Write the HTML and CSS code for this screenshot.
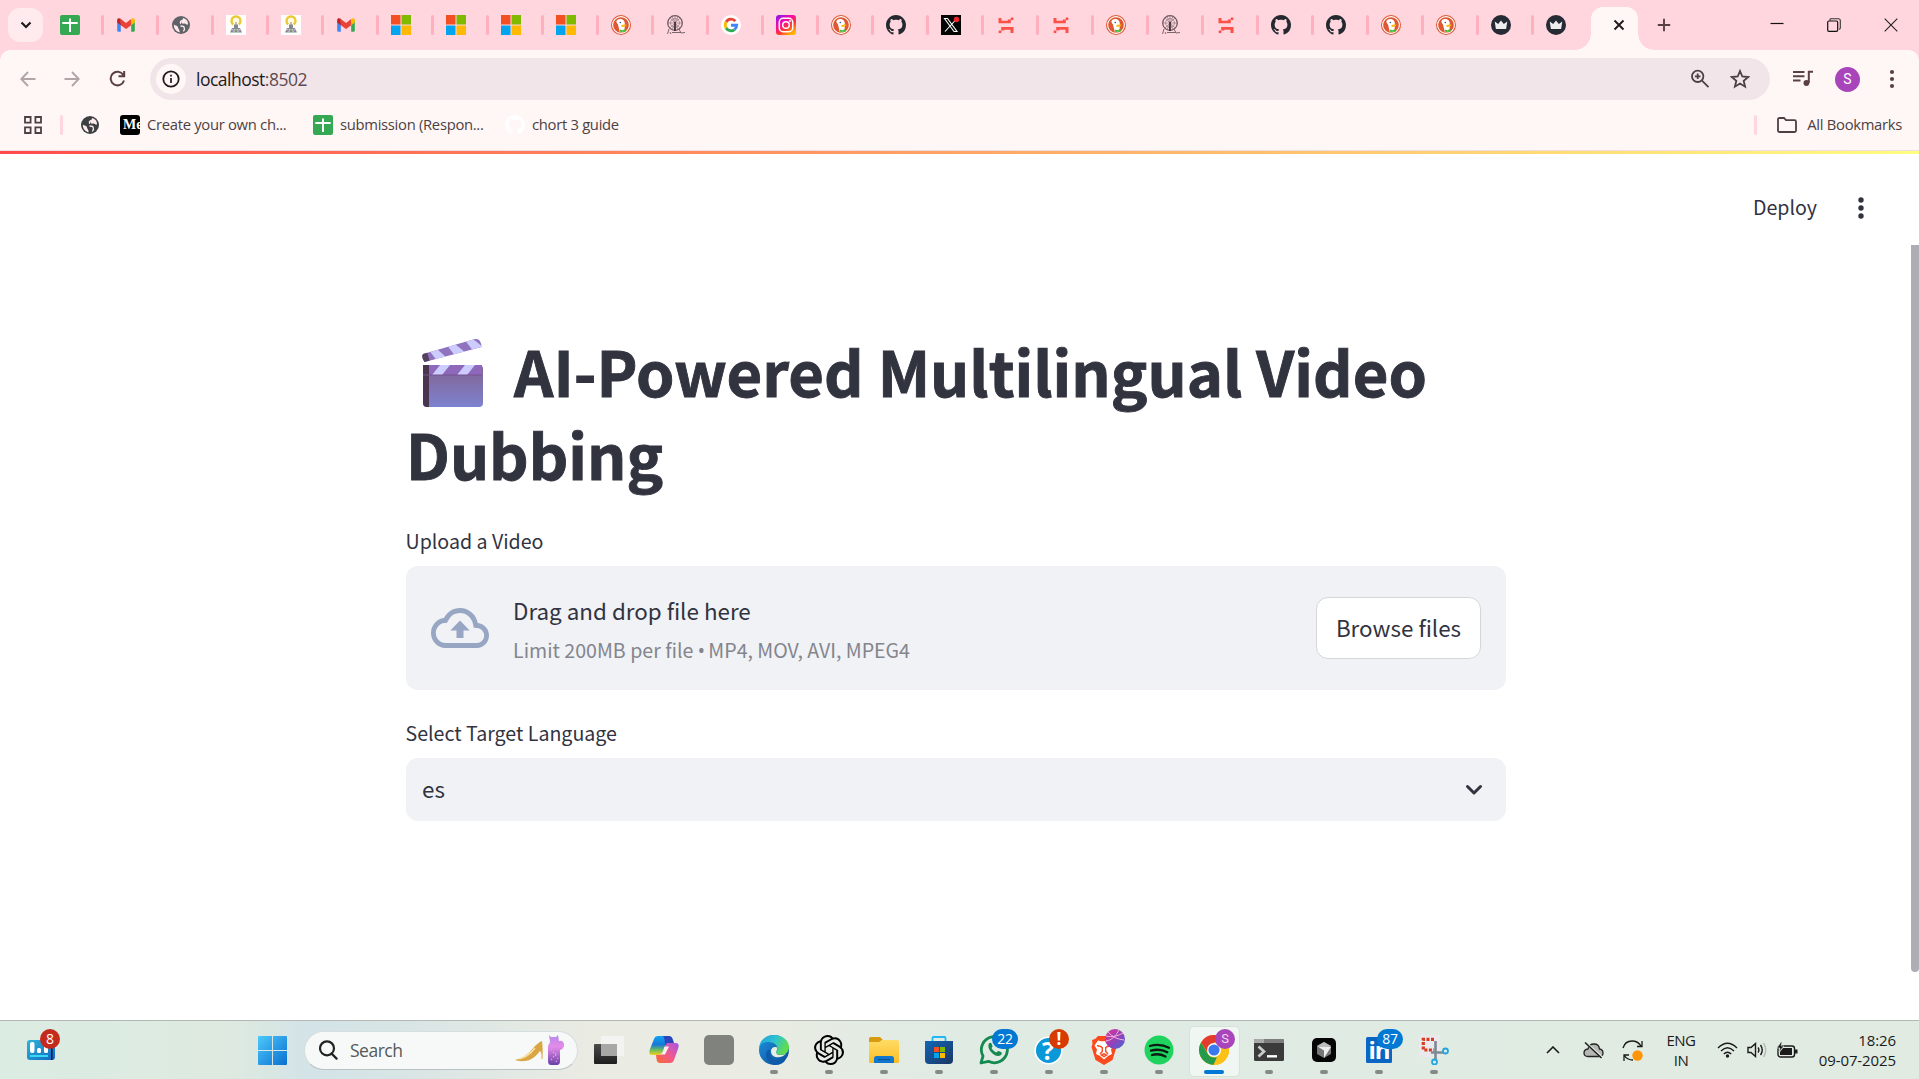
FILE: index.html
```html
<!DOCTYPE html>
<html lang="en">
<head>
<meta charset="utf-8">
<title>AI-Powered Multilingual Video Dubbing</title>
<link rel="stylesheet" href="styles.css">
</head>
<body>
<svg class="defs" width="0" height="0" aria-hidden="true">
  <defs>
    <linearGradient id="gIg" x1="0" y1="0" x2="0.7" y2="1"><stop offset="0" stop-color="#7a1cf5"/><stop offset=".4" stop-color="#f808a8"/><stop offset=".7" stop-color="#ff3a2e"/><stop offset="1" stop-color="#ffb400"/></linearGradient>
    <linearGradient id="gWin" x1="0" y1="0" x2="1" y2="1"><stop offset="0" stop-color="#4cc9fb"/><stop offset="1" stop-color="#0a6fd0"/></linearGradient>
    <linearGradient id="gWid" x1="0" y1="0" x2="1" y2="1"><stop offset="0" stop-color="#2fb4d8"/><stop offset="1" stop-color="#1267c4"/></linearGradient>
    <linearGradient id="gCopA" x1="0" y1="0" x2="0" y2="1"><stop offset="0" stop-color="#12a5f0"/><stop offset=".45" stop-color="#1477d8"/><stop offset=".75" stop-color="#6fbf5a"/><stop offset="1" stop-color="#f5cf1b"/></linearGradient>
    <linearGradient id="gCopB" x1="1" y1="0" x2="0" y2="1"><stop offset="0" stop-color="#a456e8"/><stop offset=".5" stop-color="#f0588f"/><stop offset="1" stop-color="#fb6a2c"/></linearGradient>
    <linearGradient id="gEdge" x1="0" y1="0" x2="1" y2=".4"><stop offset="0" stop-color="#1f9fe0"/><stop offset=".55" stop-color="#2fc3cf"/><stop offset="1" stop-color="#60dc4e"/></linearGradient>
    <linearGradient id="gEdgeB" x1="0" y1="0" x2="1" y2="1"><stop offset="0" stop-color="#1d92e0"/><stop offset="1" stop-color="#0c4a94"/></linearGradient>
    <linearGradient id="gFold" x1="0" y1="0" x2="0" y2="1"><stop offset="0" stop-color="#ffdc65"/><stop offset="1" stop-color="#fcbd25"/></linearGradient>
    <linearGradient id="gStore" x1="0" y1="0" x2="1" y2="1"><stop offset="0" stop-color="#0f67b8"/><stop offset="1" stop-color="#1d3563"/></linearGradient>
    <linearGradient id="gOrb" x1="0" y1="0" x2="1" y2="1"><stop offset="0" stop-color="#e0379a"/><stop offset=".5" stop-color="#9a3fb5"/><stop offset="1" stop-color="#3b6bdc"/></linearGradient>
    <linearGradient id="gClap" x1="0" y1="0" x2="0" y2="1"><stop offset="0" stop-color="#83618f"/><stop offset="1" stop-color="#7d83cf"/></linearGradient>
    <linearGradient id="gTask" x1="0" y1="0" x2="0" y2="1"><stop offset="0" stop-color="#4b4b4b"/><stop offset="1" stop-color="#1e1e1e"/></linearGradient>
    <linearGradient id="gDress" x1="0" y1="0" x2="0" y2="1"><stop offset="0" stop-color="#b58bea"/><stop offset=".4" stop-color="#e58be8"/><stop offset="1" stop-color="#6a3fa6"/></linearGradient>
    <clipPath id="cArm"><path d="M1 16 L53 1 Q59 0 59.500 9 L2.500 24 Q-1 19 1 16z"/></clipPath>
    <clipPath id="cBar"><rect x="1" y="27" width="59" height="10"/></clipPath>

    <symbol id="sheets" viewBox="0 0 20 20"><rect width="20" height="20" rx="2" fill="#34a853"/><path d="M2.300 8H17.700M10 3.500V17" stroke="#fff" stroke-width="2" fill="none"/></symbol>
    <symbol id="gmail" viewBox="0 0 20 20"><path d="M1.200 5v10.500q0 1.300 1.300 1.300h2.300V8z" fill="#4285f4"/><path d="M18.800 5v10.500q0 1.300-1.300 1.300h-2.300V8z" fill="#34a853"/><path d="M4.800 4v6.300L10 14l5.200-3.700V4L10 8z" fill="#ea4335"/><path d="M1.200 7.500V5c0-2 2-2.400 3.600-1.200v6.500z" fill="#c5221f"/><path d="M18.800 7.500V5c0-2-2-2.400-3.600-1.200v6.500z" fill="#fbbc04"/></symbol>
    <symbol id="globe" viewBox="0 0 20 20"><circle cx="10" cy="10" r="9" fill="currentColor"/><path d="M2.900 9.400c1.500 1.200 4 1 4.200 3.300.2 1.500 1.600 1.600 1.500 4.500-3.600-.6-6-4-5.700-7.800zM12.500 3.300c4 1 5 5 4.300 6.300-1.500.5-2.200-1.500-3.600-1-2 .3-3.200-.4-3-2z" fill="#ffe9ec"/><path d="M12.500 3.400c.6 1.700-.8 2.100-2.500 2.600-1.500.5.200 1.900-.8 2.700M9.500 11c2 0 3.500 0 3.800 1.700.5 1.500.3 2.400-1 3.700" stroke="#ffe9ec" stroke-width="1.300" fill="none"/></symbol>
    <symbol id="lamp" viewBox="0 0 20 20"><rect width="20" height="20" fill="#fff"/><path d="M7.200 9.500Q5 7.500 5.700 4.500M12.800 9.500Q15 7.500 14.300 4.500M5.700 4.500Q7 1.500 10 1.500T14.300 4.500" fill="none" stroke="#ecca36" stroke-width="2.400"/><circle cx="10" cy="5.800" r="3" fill="#fffbe0"/><path d="M10 7v4" stroke="#999" stroke-width="1.200"/><path d="M8 9.500h4v3.500h2l2 4.500H4L6 13h2z" fill="#85898c"/><path d="M5.500 14.800h9M8 17v-3M12 17v-3" stroke="#fff" stroke-width=".7" stroke-dasharray="1.500 1"/></symbol>
    <symbol id="ms" viewBox="0 0 20 20"><path fill="#f25022" d="M0 0h9.500v9.500H0z"/><path fill="#7fba00" d="M10.500 0H20v9.500h-9.500z"/><path fill="#00a4ef" d="M0 10.500h9.500V20H0z"/><path fill="#ffb900" d="M10.500 10.500H20V20h-9.500z"/></symbol>
    <symbol id="duck" viewBox="0 0 20 20"><circle cx="10" cy="10" r="10" fill="#de5833"/><circle cx="10" cy="10" r="8.400" fill="none" stroke="#fff" stroke-width="1.100"/><path d="M5.500 6c.5-2 3.500-2.600 5.500-1.700 2 .8 3 2.700 2.800 5l-.3 7c-1.500 1-3.300 1.200-4.700.8L7 9.500C5.800 8 5.200 7 5.500 6z" fill="#fff"/><circle cx="9.300" cy="7.500" r=".8" fill="#2d4f8e"/><path d="M10.500 10q3-1 5.300-.2-.8 1.900-5.300 2.200z" fill="#fdb60a"/><path d="M8.800 14.500l2.700.7 3-1.500v3.300l-3-.3-2.200.6z" fill="#4cba3c"/></symbol>
    <symbol id="wheel" viewBox="0 0 20 20"><g fill="none" stroke="#6d5960" stroke-width=".9"><circle cx="9" cy="8" r="7.300" stroke-width="1.300"/><circle cx="9" cy="8" r="4.500" stroke-width=".5"/><path d="M9 1v14M2 8h14M4 3l10 10M14 3L4 13M6 1.500l6 13M12 1.500l-6 13" stroke-width=".5"/><path d="M1.500 19l1.500-5M4 17l1 2M6 17.500h9M13 14l2 4 4-.5"/></g><path d="M8.300 7h1.500v9H8z" fill="#3b2d33"/></symbol>
    <symbol id="google" viewBox="0 0 20 20"><circle cx="10" cy="10" r="10" fill="#fff"/><g fill="none" stroke-width="2.900"><path d="M14.400 6.100A5.700 5.700 0 0 0 5.100 7" stroke="#ea4335"/><path d="M5.100 7a5.900 5.900 0 0 0 0 6" stroke="#fbbc05"/><path d="M5.100 13a5.700 5.700 0 0 0 8.400 1.600" stroke="#34a853"/><path d="M13.500 14.600a5.700 5.700 0 0 0 2.200-4.300H10" stroke="#4285f4"/></g></symbol>
    <symbol id="insta" viewBox="0 0 20 20"><rect width="20" height="20" rx="3" fill="url(#gIg)"/><rect x="3.300" y="3.300" width="13.400" height="13.400" rx="3.800" fill="none" stroke="#fff" stroke-width="1.500"/><circle cx="10" cy="10" r="3.300" fill="none" stroke="#fff" stroke-width="1.500"/><circle cx="14" cy="6" r="1" fill="#fff"/></symbol>
    <symbol id="github" viewBox="0 0 16 16"><path fill="currentColor" d="M8 0C3.580 0 0 3.580 0 8c0 3.540 2.290 6.530 5.470 7.590.4.070.55-.17.55-.38 0-.19-.01-.82-.01-1.490-2.010.37-2.530-.49-2.690-.94-.09-.23-.48-.94-.82-1.130-.28-.15-.68-.52-.01-.53.63-.01 1.080.58 1.230.82.72 1.210 1.870.87 2.330.66.07-.52.28-.87.51-1.070-1.780-.2-3.640-.89-3.640-3.950 0-.87.31-1.590.82-2.150-.08-.2-.36-1.020.08-2.120 0 0 .67-.21 2.200.82.64-.18 1.320-.27 2-.27s1.360.09 2 .27c1.530-1.040 2.200-.82 2.200-.82.44 1.100.16 1.920.08 2.120.51.56.82 1.270.82 2.150 0 3.070-1.870 3.750-3.650 3.950.29.25.54.73.54 1.480 0 1.070-.01 1.930-.01 2.200 0 .21.15.46.55.38A8.010 8.010 0 0 0 16 8c0-4.420-3.580-8-8-8z"/></symbol>
    <symbol id="xlogo" viewBox="0 0 20 20"><path d="M0 0h20v20H0z" fill="#050505"/><path d="M3.500 3.500h3l9.500 13h-3zM16 3.500L4 16.500" stroke="#fff" stroke-width="1.100" fill="none"/><circle cx="15.500" cy="4.500" r="2.700" fill="#f4212e"/></symbol>
    <symbol id="clip" viewBox="0 0 20 20"><g fill="#fb5148"><path d="M2.500 3H5.500V5.700H11.800V4.500H14.800V8.300H2.500z"/><circle cx="16" cy="3.800" r="1.500"/><path d="M17.500 18H14.500V14.700H8.200V15.600H5.200V12H17.500z"/><circle cx="4" cy="16.800" r="1.500"/></g></symbol>
    <symbol id="crown" viewBox="0 0 20 20"><circle cx="10" cy="10" r="10" fill="#252a34"/><path d="M3.700 6.500l3.500 2.400L10 5.500l2.800 3.400 3.500-2.400-1.200 7.500H4.900z" fill="#eee"/></symbol>
  </defs>
</svg>

<div class="screen">
  <header class="tabstrip">
    <div class="tab-search"><svg width="12" height="8" viewBox="0 0 12 8"><path d="M1.500 1.500L6 6l4.500-4.500" fill="none" stroke="#1f1a1b" stroke-width="2.200"/></svg></div>
    <div class="tabs">
      <div class="tab"><svg><use href="#sheets"/></svg></div>
      <div class="tab"><svg><use href="#gmail"/></svg></div>
      <div class="tab grey"><svg><use href="#globe"/></svg></div>
      <div class="tab"><svg><use href="#lamp"/></svg></div>
      <div class="tab"><svg><use href="#lamp"/></svg></div>
      <div class="tab"><svg><use href="#gmail"/></svg></div>
      <div class="tab"><svg><use href="#ms"/></svg></div>
      <div class="tab"><svg><use href="#ms"/></svg></div>
      <div class="tab"><svg><use href="#ms"/></svg></div>
      <div class="tab"><svg><use href="#ms"/></svg></div>
      <div class="tab"><svg><use href="#duck"/></svg></div>
      <div class="tab"><svg><use href="#wheel"/></svg></div>
      <div class="tab"><svg><use href="#google"/></svg></div>
      <div class="tab"><svg><use href="#insta"/></svg></div>
      <div class="tab"><svg><use href="#duck"/></svg></div>
      <div class="tab"><svg><use href="#github"/></svg></div>
      <div class="tab"><svg><use href="#xlogo"/></svg></div>
      <div class="tab"><svg><use href="#clip"/></svg></div>
      <div class="tab"><svg><use href="#clip"/></svg></div>
      <div class="tab"><svg><use href="#duck"/></svg></div>
      <div class="tab"><svg><use href="#wheel"/></svg></div>
      <div class="tab"><svg><use href="#clip"/></svg></div>
      <div class="tab"><svg><use href="#github"/></svg></div>
      <div class="tab"><svg><use href="#github"/></svg></div>
      <div class="tab"><svg><use href="#duck"/></svg></div>
      <div class="tab"><svg><use href="#duck"/></svg></div>
      <div class="tab"><svg><use href="#crown"/></svg></div>
      <div class="tab"><svg><use href="#crown"/></svg></div>
    </div>
    <div class="tab-active"><svg width="12" height="12" viewBox="0 0 12 12"><path d="M1.500 1.500l9 9M10.500 1.500l-9 9" stroke="#1f1a1b" stroke-width="1.900"/></svg></div>
    <div class="new-tab"><svg width="14" height="14" viewBox="0 0 14 14"><path d="M7 .8v12.400M.8 7h12.400" stroke="#5a4044" stroke-width="1.900"/></svg></div>
    <div class="win-controls">
      <svg width="14" height="14" viewBox="0 0 14 14"><path d="M.5 5.500h13" stroke="#111" stroke-width="1.200"/></svg>
      <svg width="14" height="14" viewBox="0 0 14 14"><path d="M3 2.800V1.500Q3 .7 4 .7h7.300q2 0 2 2V10q0 1-1.300 1.300" fill="none" stroke="#333" stroke-width="1.100"/><rect x=".7" y="3" width="10" height="10.300" rx="1.300" fill="none" stroke="#111" stroke-width="1.200"/></svg>
      <svg width="14" height="14" viewBox="0 0 14 14"><path d="M.7.700l12.600 12.600M13.300.700L.7 13.300" stroke="#222" stroke-width="1.100"/></svg>
    </div>
  </header>

  <div class="chrome">
    <div class="toolbar">
      <div class="nav">
        <svg width="16" height="16" viewBox="0 0 16 16" fill="none" stroke="#b3a5a7" stroke-width="1.900"><path d="M15.500 8H1.500M8 1L1.300 8 8 15"/></svg>
        <svg width="16" height="16" viewBox="0 0 16 16" fill="none" stroke="#b3a5a7" stroke-width="1.900"><path d="M.5 8h14M8 1l6.700 7L8 15"/></svg>
        <svg width="17" height="17" viewBox="0 0 17 17" fill="none" stroke="#5a4044" stroke-width="2"><path d="M14.300 5A6.800 6.800 0 1 0 15 10.500M15.200 1v5.200H9.500"/></svg>
      </div>
      <div class="omnibox">
        <span class="site-info"><svg width="18" height="18" viewBox="0 0 18 18"><circle cx="9" cy="9" r="7.700" fill="none" stroke="#1f1a1b" stroke-width="1.800"/><path d="M9 8v5M9 4.800v1.800" stroke="#1f1a1b" stroke-width="1.700"/></svg></span>
        <span class="url">localhost<span class="port">:8502</span></span>
        <svg class="zoom" width="20" height="20" viewBox="0 0 20 20" fill="none" stroke="#4d3f42" stroke-width="1.800"><circle cx="7.700" cy="7.300" r="5.700"/><path d="M12 11.700l6.500 6.500M7.700 4.500v5.600M4.900 7.300h5.600"/></svg>
        <svg width="20" height="20" viewBox="0 0 20 20" fill="none" stroke="#4d3f42" stroke-width="1.800"><path d="M10 2l2.300 5.500 5.900.5-4.500 3.900 1.400 5.800-5.100-3.100-5.100 3.100 1.400-5.800L1.800 8l5.900-.5z"/></svg>
      </div>
      <svg class="media" width="20" height="18" viewBox="0 0 20 18" fill="none" stroke="#5a4044" stroke-width="2"><path d="M0 2h11.500M0 6.300h11.500M0 10.500h7.500M15.800 13V1.800H20"/><circle cx="13.400" cy="13" r="2.900" fill="#5a4044" stroke="none"/></svg>
      <span class="avatar">S</span>
      <svg class="menu" width="6" height="20" viewBox="0 0 6 20" fill="#5a4044"><circle cx="3" cy="3" r="2.100"/><circle cx="3" cy="10" r="2.100"/><circle cx="3" cy="17" r="2.100"/></svg>
    </div>
    <div class="bookmarks">
      <svg class="grid" width="18" height="18" viewBox="0 0 18 18" fill="none" stroke="#4d3f42" stroke-width="1.800"><path d="M1 1h5.600v5.600H1zM11.400 1H17v5.600h-5.600zM1 11.400h5.600V17H1zM11.400 11.400H17V17h-5.600z"/></svg>
      <i class="sep"></i>
      <svg class="bm-globe" width="20" height="20"><use href="#globe"/></svg>
      <span class="bm bm-a"><span class="medium">Me</span><span class="bm-text">Create your own ch...</span></span>
      <span class="bm bm-b"><svg width="20" height="20"><use href="#sheets"/></svg><span class="bm-text">submission (Respon...</span></span>
      <span class="bm bm-c"><svg width="20" height="20"><use href="#github"/></svg><span class="bm-text">chort 3 guide</span></span>
      <span class="all"><i class="sep"></i><svg width="20" height="16" viewBox="0 0 20 16" fill="none" stroke="#4d3f42" stroke-width="1.800"><path d="M1 2.500Q1 1 2.500 1H7l2 2.200h8.500Q19 3.200 19 4.700v8.800Q19 15 17.500 15h-15Q1 15 1 13.500z"/></svg><span class="bm-text">All Bookmarks</span></span>
    </div>
  </div>

  <main class="app">
    <div class="decoration"></div>
    <div class="app-header"><span class="deploy">Deploy</span><svg width="6" height="22" viewBox="0 0 6 22" fill="#31333f"><circle cx="3" cy="3" r="2.700"/><circle cx="3" cy="11" r="2.700"/><circle cx="3" cy="19" r="2.700"/></svg></div>
    <div class="content">
      <h1><svg class="clapper" width="61" height="69" viewBox="0 0 61 69">
        <g clip-path="url(#cArm)"><path d="M0 0h61v26H0z" fill="#8f73bf"/><path d="M6 11h9l10 9-9 4zM24 6h9l11 9-10 4zM42 1h9l11 9-10 4z" fill="#ccccff"/><path d="M0 14h5l3 10H0z" fill="#54405f"/></g>
        <rect x="1" y="27" width="60" height="42" rx="4" fill="url(#gClap)"/><path d="M1 27h6v42H5q-4 0-4-4z" fill="#49354f"/><g clip-path="url(#cBar)"><path d="M7 27h54v10H7z" fill="#8d68bb"/><path d="M18 27h10l-8 10H10zM43 27h10l-8 10H35z" fill="#ccccff"/></g><path d="M1 37h59" stroke="#755391" stroke-width="1"/></svg>AI-Powered Multilingual Video<br>Dubbing</h1>
      <label class="label">Upload a Video</label>
      <section class="dropzone">
        <svg class="cloud" width="58" height="40" viewBox="0 4 24 16" preserveAspectRatio="none" fill="#97a6c3"><path d="M19.350 10.040A7.490 7.490 0 0 0 12 4C9.110 4 6.600 5.640 5.350 8.040A5.994 5.994 0 0 0 0 14c0 3.310 2.690 6 6 6h13c2.760 0 5-2.240 5-5 0-2.640-2.050-4.780-4.650-4.960zM19 18H6c-2.210 0-4-1.790-4-4 0-2.050 1.530-3.760 3.560-3.970l1.070-.11.5-.95A5.469 5.469 0 0 1 12 6c2.620 0 4.880 1.860 5.390 4.430l.3 1.500 1.530.11A2.980 2.980 0 0 1 22 15c0 1.650-1.350 3-3 3zM8 13h2.550v3h2.900v-3H16l-4-4z"/></svg>
        <div class="drop-text"><span class="drop-main">Drag and drop file here</span><span class="drop-sub">Limit 200MB per file <span class="bullet">•</span> MP4, MOV, AVI, MPEG4</span></div>
        <button class="browse">Browse files</button>
      </section>
      <label class="label second">Select Target Language</label>
      <div class="select"><span>es</span><svg width="18" height="12" viewBox="0 0 18 12"><path d="M2.500 2.500L9 9l6.500-6.500" fill="none" stroke="#31333f" stroke-width="3" stroke-linecap="round" stroke-linejoin="round"/></svg></div>
    </div>
    <div class="scrollbar"></div>
  </main>

  <footer class="taskbar">
    <div class="widget"><svg width="29" height="20" viewBox="0 0 29 20"><rect width="28" height="20" rx="3" fill="url(#gWid)"/><path d="M24 5h1.500v15H24z" fill="#0b1b34"/><rect x="3" y="2" width="4.500" height="11" rx="2" fill="#fff"/><rect x="10" y="8" width="4" height="5" rx="1.500" fill="#fff"/><rect x="17" y="5" width="4" height="8" rx="1.500" fill="#fff"/><path d="M3 16h18" stroke="#35d9f2" stroke-width="2"/></svg><b class="badge red">8</b></div>
    <svg class="start" width="29" height="29" viewBox="0 0 29 29"><path fill="url(#gWin)" d="M1 0h13v14H0V1q0-1 1-1zM15 0h13q1 0 1 1v13H15zM0 15h14v14H1q-1 0-1-1zM15 15h14v13q0 1-1 1H15z"/></svg>
    <div class="search"><svg width="20" height="20" viewBox="0 0 20 20" fill="none" stroke="#222" stroke-width="2.200"><circle cx="9" cy="8.300" r="7"/><path d="M13.600 13.600l5 5" stroke-linecap="round"/></svg><span>Search</span>
      <svg class="art" width="50" height="30" viewBox="0 0 50 30"><path d="M1 25Q12 23 20 12Q25 7 28 6Q29 12 28.500 24H27.500Q28 17 26 16Q20 24 14 25.500Q6 27 1 25z" fill="#d9a545"/><path d="M5 24Q14 22 21 13" stroke="#fae2a0" stroke-width="1.500" fill="none"/><path d="M35 0l2 2h5l2-2 1 6q4-1 5 3t-4 6v11q0 4-3 4h-6q-3 0-3-4V11l2-4z" fill="url(#gDress)"/><path d="M37 14l6 8M37 25l6-8M42 27l2-4" stroke="#d9a4ea" stroke-width="1.200" stroke-dasharray="1.500 2"/></svg></div>
    <div class="apps">
      <div class="app-icon"><svg width="30" height="30" viewBox="0 0 30 30"><rect x="0" y="9" width="23" height="20" rx="1" fill="url(#gTask)"/><rect x="7" y="1" width="23" height="20" rx="1" fill="#f5f5f5" opacity=".85"/><path d="M7 9h16v12H7z" fill="#a7a7a5"/></svg></div>
      <div class="app-icon"><svg width="30" height="30" viewBox="0 0 30 30"><path d="M9 1h10q3 0 4 4l1 3h-4q-3 0-4 4l-2 5q-1 3-4 3H3q-4 0-2-6L5 4q1-3 4-3z" fill="url(#gCopA)"/><path d="M17 1h3q3 0 4 4l1 3h-5q-3 0-4 3 0-8-2-10z" fill="#2a45bd"/><path d="M21 28H11q-3 0-3.500-4l-.5-4h3q3 0 4-4l2-5q1-3 4-3h7q4 0 2 6l-4 11q-1 3-4 3z" fill="url(#gCopB)"/><path d="M15.500 11.500h4.500l-4 8h-5q2-.5 3-3.500z" fill="#f5eff0"/></svg></div>
      <div class="app-icon"><svg width="30" height="30" viewBox="0 0 30 30"><rect width="30" height="30" rx="5" fill="#80827e"/></svg></div>
      <div class="app-icon run"><svg width="30" height="30" viewBox="0 0 30 30"><circle cx="15" cy="15" r="15" fill="url(#gEdgeB)"/><path d="M0 13C1 4 8 0 15 0c9 0 15 6 15 12 0 5-4 8-8 8-3 0-5-1-5-2.500 0-1 1.500-1.500 1.500-4C18.500 9 13 7 9 7c-4 0-8 2-9 6z" fill="url(#gEdge)"/><path d="M11 15q-1 7 5 11 6 2 11-2-3 6-11 6-9-2-9-11 1-5 4-4z" fill="#0f5ba9"/><path d="M12 16c0-3 3-5 6-3.500.8 2-.8 3.500-1 5 .5 3 6 3.500 10 1-3 5-15 6-15-2.500z" fill="#e9ece3"/></svg></div>
      <div class="app-icon run"><svg width="30" height="30" viewBox="0 0 24 24"><path d="M22.2819 9.8211a5.9847 5.9847 0 0 0-.5157-4.9108 6.0462 6.0462 0 0 0-6.5098-2.9A6.0651 6.0651 0 0 0 4.9807 4.1818a5.9847 5.9847 0 0 0-3.9977 2.9 6.0462 6.0462 0 0 0 .7427 7.0966 5.980 5.980 0 0 0 .511 4.9107 6.051 6.051 0 0 0 6.5146 2.9001A5.9847 5.9847 0 0 0 13.2599 24a6.0557 6.0557 0 0 0 5.7718-4.2058 5.9894 5.9894 0 0 0 3.9977-2.9001 6.0557 6.0557 0 0 0-.7475-7.0729zm-9.022 12.6081a4.4755 4.4755 0 0 1-2.8764-1.0408l.1419-.0804 4.7783-2.7582a.7948.7948 0 0 0 .3927-.6813v-6.7369l2.020 1.1686a.071.071 0 0 1 .038.052v5.5826a4.504 4.504 0 0 1-4.4945 4.4944zm-9.6607-4.1254a4.4708 4.4708 0 0 1-.5346-3.0137l.142.0852 4.783 2.7582a.7712.7712 0 0 0 .7806 0l5.8428-3.3685v2.3324a.0804.0804 0 0 1-.0332.0615L9.740 19.9502a4.4992 4.4992 0 0 1-6.1408-1.6464zM2.3408 7.8956a4.485 4.485 0 0 1 2.3655-1.9728V11.600a.7664.7664 0 0 0 .3879.6765l5.8144 3.3543-2.0201 1.1685a.0757.0757 0 0 1-.071 0l-4.8303-2.7865A4.504 4.504 0 0 1 2.3408 7.872zm16.5963 3.8558L13.1038 8.364 15.1192 7.200a.0757.0757 0 0 1 .071 0l4.8303 2.7913a4.4944 4.4944 0 0 1-.6765 8.1042v-5.6772a.790.790 0 0 0-.407-.667zm2.0107-3.0231l-.142-.0852-4.7735-2.7818a.7759.7759 0 0 0-.7854 0L9.409 9.2297V6.8974a.0662.0662 0 0 1 .0284-.0615l4.8303-2.7866a4.4992 4.4992 0 0 1 6.6802 4.660zM8.3065 12.863l-2.020-1.1638a.0804.0804 0 0 1-.038-.0567V6.0742a4.4992 4.4992 0 0 1 7.3757-3.4537l-.142.0805L8.704 5.459a.7948.7948 0 0 0-.3927.6813zm1.0976-2.3654l2.602-1.4998 2.6069 1.4998v2.9994l-2.5974 1.4997-2.6067-1.4997z"/></svg></div>
      <div class="app-icon run"><svg width="30" height="30" viewBox="0 0 30 30"><path d="M1.500 2H11l3 3-3 4H0V3.500Q0 2 1.500 2z" fill="#d99a12"/><path d="M0 7h10l3-2h15.500Q30 5 30 6.500V27q0 1-1 1H1q-1 0-1-1z" fill="url(#gFold)"/><path d="M5 28v-4.500Q5 21 7.500 21h15q2.500 0 2.500 2.500V28z" fill="#1177cd"/><path d="M9 24.500h12" stroke="#0c5595" stroke-width="1.200"/></svg></div>
      <div class="app-icon run"><svg width="30" height="30" viewBox="0 0 30 30"><path d="M8.500 6V3q0-1 1-1h11q1 0 1 1v3" fill="none" stroke="#1eb8f5" stroke-width="1.800"/><path d="M1 6h28v19q0 4-4 4H5q-4 0-4-4z" fill="url(#gStore)"/><path fill="#f25022" d="M10 12h5v5h-5z"/><path fill="#7fba00" d="M16 12h5v5h-5z"/><path fill="#00a4ef" d="M10 18h5v5h-5z"/><path fill="#ffb900" d="M16 18h5v5h-5z"/></svg></div>
      <div class="app-icon run"><svg width="30" height="30" viewBox="0 0 30 30"><path d="M2 28l2-7A13 13 0 1 1 9.500 26.300z" fill="none" stroke="#158a50" stroke-width="2.800" stroke-linejoin="round"/><path d="M10 8.300c1-1 2-.8 2.500.2l1 2.500c.2.700-.4 1.300-1 2 1 2 3 3.800 5 4.500.8-.8 1.300-1.800 2.200-1.500l2.600 1.300c.9.500.6 2-.6 3-5 3.500-15-6-11.700-12z" fill="#158a50"/></svg><b class="badge blue">22</b></div>
      <div class="app-icon run"><svg width="30" height="30" viewBox="0 0 30 30"><circle cx="14.500" cy="15.500" r="13.300" fill="#0a98d8" stroke="#fff" stroke-width="1.500"/></svg><b class="glyph question">?</b><b class="badge orange">!</b></div>
      <div class="app-icon run"><svg width="30" height="30" viewBox="0 0 30 30"><path d="M9 1h12l3 3 3 1-.5 4 1 3-4 13-8.500 5-8.500-5-4-13 1-3L3 5l3-1z" fill="#fb4a1d"/><path d="M9 5.500l3 .8h6l3-.8 3.500 5-2.500 4 1 4.500-4 2-4 3.500-4-3.500-4-2 1-4.500-2.500-4z" fill="#fff"/><path d="M8 10.500l5 1.500M22 10.500l-5 1.500M13.300 12v4.500l-2.300 2.500M16.700 12v4.500l2.300 2.500M12.500 20l2.500-1.200 2.500 1.200-2.500 1.700z" stroke="#fb4a1d" stroke-width="1.400" fill="none"/></svg><b class="badge orb"><svg width="20" height="20" viewBox="0 0 20 20"><circle cx="10" cy="10" r="10" fill="url(#gOrb)"/><path d="M1 7q9 2 17-3M3 3q6 7 16 8M1 12q8-1 13-11" stroke="#f1b1df" fill="none"/></svg></b></div>
      <div class="app-icon run"><svg width="30" height="30" viewBox="0 0 30 30"><circle cx="15" cy="15" r="14.500" fill="#1ed45e"/><path d="M6 11q10-3 19 1.800M7 15.700q9-2.500 16.300 1.600M8 20q7-2 13.500 1.500" fill="none" stroke="#0d1a11" stroke-width="2.300" stroke-linecap="round"/></svg></div>
      <div class="app-icon run active"><svg width="30" height="30" viewBox="0 0 30 30"><circle cx="15" cy="15" r="15" fill="#fbc116"/><path d="M2 7.500A15 15 0 0 1 28 7.500H15L9 18z" fill="#e33b2e"/><path d="M2 7.500l7 11.500q2 3.500 6 3.500h3L14.500 30A15 15 0 0 1 2 7.500z" fill="#269a4a"/><path d="M18.500 22L14.500 30A15 15 0 0 0 28 7.500H15z" fill="#fbc116"/><circle cx="15" cy="15" r="7" fill="#fff"/><circle cx="15" cy="15" r="5.600" fill="#3c79ee"/></svg><b class="badge purple">S</b></div>
      <div class="app-icon run"><svg width="30" height="30" viewBox="0 0 30 30"><rect y="4" width="30" height="22" rx="1.500" fill="#3b3b3b"/><path d="M1.500 4h27Q30 4 30 5.500V8H0V5.500Q0 4 1.500 4z" fill="#7e7e7e"/><path d="M0 8V5.500Q0 4 1.500 4H10v4z" fill="#aaa"/><path d="M4.500 11.500l5.500 5-5.500 5" stroke="#ccc" stroke-width="2.700" fill="none"/><path d="M13 21.300h10" stroke="#fff" stroke-width="2.400"/></svg></div>
      <div class="app-icon run"><svg width="30" height="30" viewBox="0 0 30 30"><rect x="3" y="3" width="24" height="24" rx="5" fill="#050505"/><path d="M15 7l7 4v8l-7 4-7-4v-8z" fill="#777"/><path d="M8 11l7-4 7 4-7 4z" fill="#bcbcbc"/><path d="M9.500 12H22l-7 11v-7.500z" fill="#eee"/></svg></div>
      <div class="app-icon run"><svg width="30" height="30" viewBox="0 0 30 30"><rect x="2" y="2" width="26" height="26" rx="1.500" fill="#0a66c2"/></svg><b class="glyph linkedin">in</b><b class="badge blue">87</b></div>
      <div class="app-icon run"><svg width="30" height="30" viewBox="0 0 30 30"><rect x="0" y="0" width="21" height="22" rx="2" fill="#ebe9ed"/><path d="M15 4.300H4.300V15H15" fill="none" stroke="#d83b1d" stroke-width="3.200" stroke-dasharray="3 1.500"/><path d="M16.500 6v18M12 17.500h13" stroke="#7f8992" stroke-width="2.600"/><circle cx="26.500" cy="16" r="2.500" fill="none" stroke="#25a4dd" stroke-width="1.800"/><circle cx="15.500" cy="27" r="2.500" fill="none" stroke="#25a4dd" stroke-width="1.800"/></svg></div>
    </div>
    <div class="tray">
      <svg class="t-up" width="14" height="8" viewBox="0 0 14 8"><path d="M1 7l6-6 6 6" fill="none" stroke="#1b1b1b" stroke-width="1.600"/></svg>
      <svg class="t-cloud" width="21" height="17" viewBox="0 0 21 17"><path d="M5 14.500Q1 14.500 1 11t4-4Q6 2 11 2t5.500 5Q20 7.500 20 11t-4 3.500z" fill="#b5b9b5" stroke="#222" stroke-width="1.300"/><path d="M3 1l16 14.500" stroke="#e1ebe2" stroke-width="2.600"/><path d="M2 .5l16.500 15.500" stroke="#1b1b1b" stroke-width="1.500"/></svg>
      <svg class="t-sync" width="21" height="21" viewBox="0 0 21 21" fill="none" stroke="#1b1b1b" stroke-width="1.300"><path d="M1 8Q3 1 10 1q6 0 9 5M20 1v5.500h-5M2 21v-6h5M2 15q3 5 9 5"/><circle cx="15.500" cy="15.500" r="5.200" fill="#ff9505" stroke="none"/></svg>
      <div class="lang">ENG<br>IN</div>
      <svg class="t-wifi" width="21" height="16" viewBox="0 0 21 16" fill="none" stroke="#1b1b1b" stroke-width="1.400"><path d="M1 6q9.500-9.500 19 0M4 9q6.500-6.500 13 0M6.800 12q3.700-3.700 7.400 0"/><circle cx="10.500" cy="14" r="1.700" fill="#1b1b1b" stroke="none"/></svg>
      <svg class="t-vol" width="20" height="16" viewBox="0 0 20 16" fill="none" stroke="#1b1b1b" stroke-width="1.400"><path d="M1 5.500h3L8.500 1.500v13L4 10.500H1zM11 5.500q1.800 2.500 0 5M13.500 3q3.500 5 0 10"/><path d="M16.500 1q4.500 7 0 14" stroke="#b4bcb5"/></svg>
      <svg class="t-bat" width="21" height="17" viewBox="0 0 21 17"><rect x="1" y="4" width="16.500" height="11" rx="2.500" fill="none" stroke="#1b1b1b" stroke-width="1.400"/><path d="M6 6h9v7H3v-3z" fill="#1b1b1b"/><path d="M18 7.500h2.500v4H18z" fill="#1b1b1b"/><path d="M4 0L0 6h3L2 10l5-6H4l1-4z" fill="#1b1b1b" stroke="#e1ebe2" stroke-width=".6"/></svg>
      <div class="clock">18:26<br>09-07-2025</div>
    </div>
  </footer>
</div>
</body>
</html>
```

FILE: styles.css
```css
* { box-sizing: border-box; }
body { margin: 0; background: #fff; font-family: "Open Sans", "Noto Sans", sans-serif; }
svg { display: block; flex: none; }
.defs { position: absolute; }
.screen { width: 1919px; height: 1079px; display: flex; flex-direction: column; overflow: hidden; }

/* Tab strip */
.tabstrip { height: 50px; background: #ffd6de; display: flex; flex: none; align-items: flex-start; padding-left: 8px; }
.tab-search { width: 35px; height: 34px; margin-top: 8px; border-radius: 12px; background: #ffebee; display: flex; align-items: center; justify-content: center; }
.tabs { display: flex; }
.tab { width: 55px; height: 50px; display: flex; align-items: center; padding-left: 18px; color: #24292f; }
.tab.grey { color: #5f6368; }
.tab svg { width: 20px; height: 20px; }
.tab:first-child svg { margin: 0 1px 0 -1px; }
.tab:not(:last-child)::after { content: ""; flex: none; width: 3px; height: 20px; margin-left: 20px; margin-right: -6px; border-radius: 2px; background: #ffb0bf; }
.tab-active { position: relative; width: 47px; height: 43px; margin: 7px 0 0 8px; border-radius: 12px 12px 0 0; background: #fff7f6; display: flex; align-items: center; justify-content: center; padding: 0 0 7px 8px; }
.tab-active::before, .tab-active::after { content: ""; position: absolute; bottom: 0; width: 16px; height: 16px; }
.tab-active::before { left: -16px; background: radial-gradient(circle at 0 0, transparent 15.500px, #fff7f6 16px); }
.tab-active::after { right: -16px; background: radial-gradient(circle at 100% 0, transparent 15.500px, #fff7f6 16px); }
.new-tab { margin: 18px 0 0 19px; }
.win-controls { display: flex; gap: 43px; margin: 18px 21px 0 auto; }

/* Toolbar */
.chrome { height: 101px; flex: none; background: #fff7f6; border-bottom: 1px solid #eedde1; position: relative; }
.chrome::before, .chrome::after { content: ""; position: absolute; top: 0; width: 10px; height: 10px; }
.chrome::before { left: 0; background: radial-gradient(circle at 100% 100%, transparent 9.500px, #ffd6de 10px); }
.chrome::after { right: 0; background: radial-gradient(circle at 0 100%, transparent 9.500px, #ffd6de 10px); }
.toolbar { display: flex; align-items: center; height: 58px; padding: 0 24px 0 20px; }
.nav { display: flex; gap: 28px; width: 130px; align-items: center; }
.nav svg:last-child { margin-left: 1px; margin-top: -1px; }
.omnibox { width: 1620px; height: 42px; border-radius: 21px; background: #f1e5e9; display: flex; align-items: center; padding: 0 20px 0 6px; }
.site-info { width: 30px; height: 30px; border-radius: 50%; background: #fff7f6; display: flex; align-items: center; justify-content: center; }
.url { margin-left: 10px; font-size: 17.500px; letter-spacing: -.5px; color: #1f1a1b; line-height: 24px; }
.port { color: #5d4a4e; }
.zoom { margin: 0 20px 0 auto; }
.media { margin-left: 23px; }
.avatar { width: 25px; height: 25px; border-radius: 50%; background: #a845ba; color: #fff; font: 14px/25px Roboto, sans-serif; text-align: center; margin-left: 22px; }
.menu { margin-left: auto; }

/* Bookmarks */
.bookmarks { display: flex; align-items: center; height: 34px; padding: 0 17px 0 24px; color: #4d3f42; }
.sep { width: 3px; height: 20px; border-radius: 2px; background: #ffd6de; }
.grid { margin-right: 18px; }
.bm-globe { margin-left: 17px; color: #3c4043; }
.bm { display: flex; align-items: center; gap: 7px; }
.bm-text { font-size: 14.800px; line-height: 20px; white-space: nowrap; letter-spacing: -.3px; margin-top: -2px; }
.bm-a { margin-left: 20px; width: 193px; }
.bm-b { width: 192px; }
.bm-c svg { color: #fff; }
.medium { width: 20px; height: 20px; border-radius: 3px; background: #000; color: #fff; overflow: hidden; font: bold 14px/20px "Liberation Serif", serif; padding-left: 3px; }
.all { margin-left: auto; display: flex; align-items: center; }
.all svg { margin: 0 10px 0 20px; }

/* Streamlit page */
.app { height: 869px; flex: none; position: relative; color: #31333f; font-family: "Noto Sans CJK SC", "Noto Sans", sans-serif; }
.decoration { height: 3px; background: linear-gradient(90deg, #ff4b4b, #fffd80); }
.app-header { display: flex; align-items: center; justify-content: flex-end; height: 108px; gap: 41px; padding-right: 55px; }
.deploy { font-size: 19.600px; line-height: 30px; margin-top: -3px; }
.content { width: 1100px; margin-left: 406px; padding-top: 67px; }
h1 { margin: 0; font-size: 61.500px; line-height: 83px; height: 166px; font-weight: 700; color: #31333f; white-space: nowrap; -webkit-text-stroke: .9px #31333f; }
.clapper { display: inline-block; vertical-align: -10px; margin: 0 31px 0 16px; }
.label { display: block; font-size: 19.600px; line-height: 28px; margin-top: 32px; margin-left: -.5px; }
.dropzone { height: 124px; margin-top: 11px; border-radius: 12px; background: #f0f2f6; display: flex; align-items: center; padding: 0 25px; }
.drop-text { display: flex; flex-direction: column; margin-left: 24px; padding-top: 5px; }
.drop-main { font-size: 22.400px; line-height: 38px; }
.drop-sub { font-size: 19.600px; line-height: 41px; color: #84858d; white-space: nowrap; }
.bullet { font-family: "Noto Sans", sans-serif; font-size: 19px; line-height: 1; letter-spacing: -.9px; }
.browse { margin-left: auto; width: 165px; height: 62px; border: 1px solid #d6d6d9; border-radius: 12px; background: #fff; color: inherit; font: 22.400px/32px "Noto Sans CJK SC", sans-serif; padding: 0 0 2px; }
.second { margin-top: 29px; }
.select { height: 63px; margin-top: 11px; border-radius: 12px; background: #f0f2f6; display: flex; align-items: center; justify-content: space-between; padding: 0 23px 0 16px; font-size: 22.400px; line-height: 36px; }
.select span { margin-top: -4px; }
.scrollbar { position: absolute; right: 0; top: 94px; width: 8px; height: 727px; background: #adadb3; border-radius: 0 0 4px 4px; }

/* Taskbar */
.taskbar { height: 59px; border-top: 1px solid #b2b8b3; display: flex; align-items: center; background: linear-gradient(90deg, #dbece3 0, #deeae0 230px, #d3e3e7 310px, #d8e5e5 400px, #eaebe3 590px, #eaece3 740px, #dfebe3 960px, #e1ebe2 100%); color: #1b1b1b; }
.widget { position: relative; margin-left: 27px; width: 29px; }
.start { margin-left: 202px; }
.search { width: 274px; height: 39px; margin-left: 17px; border-radius: 20px; background: #f6f9f8; border: 1px solid #d5dfdf; border-bottom-color: #b9c2c2; display: flex; align-items: center; padding: 0 13px; font-size: 17.500px; letter-spacing: -.5px; color: #55595a; }
.search span { margin-left: 12px; }
.art { margin-left: auto; }
.apps { display: flex; margin-left: 3px; }
.app-icon { position: relative; width: 55px; height: 58px; display: flex; align-items: center; justify-content: center; }
.app-icon > svg { position: relative; }
.run::after { content: ""; position: absolute; left: 24px; bottom: 5px; width: 8px; height: 4px; border-radius: 2px; background: #858a86; }
.active::before { content: ""; position: absolute; left: 3px; top: 5px; width: 49px; height: 49px; border-radius: 5px; background: #f0f6f1; border: 1px solid #d8e2d9; }
.active::after { left: 18px; width: 20px; background: #0078d4; }
.badge { position: absolute; top: 8px; left: 29px; min-width: 20px; height: 20px; border-radius: 10px; color: #fff; font-weight: 400; font-size: 14px; line-height: 20px; text-align: center; }
.blue { background: #0078d4; width: 26px; left: 26px; letter-spacing: -.3px; }
.orange { background: #d83b01; left: 28px; font-weight: 700; font-size: 17px; }
.purple { background: #a845ba; font: 13px/20px Roboto, sans-serif; color: #f3d6f6; }
.red { background: #c42b1c; top: -11px; left: 13px; }
.orb { left: 29px; }
.glyph { position: absolute; left: 12px; top: 11px; width: 30px; color: #fff; font-weight: 700; line-height: 36px; text-align: center; }
.question { font-size: 25px; }
.linkedin { font-size: 24px; letter-spacing: -1px; left: 13px; }
.tray { margin-left: auto; padding-right: 23px; display: flex; align-items: center; font-size: 15px; line-height: 20px; letter-spacing: 0; }
.t-up { margin-right: 1px; }
.t-cloud { margin-left: 22px; }
.t-sync { margin-left: 18px; }
.lang { margin-left: 20px; width: 36px; text-align: center; letter-spacing: -.5px; }
.t-wifi { margin-left: 18px; }
.t-vol { margin-left: 9px; }
.t-bat { margin-left: 10px; }
.clock { width: 98px; text-align: right; white-space: nowrap; letter-spacing: -.1px; }
```
